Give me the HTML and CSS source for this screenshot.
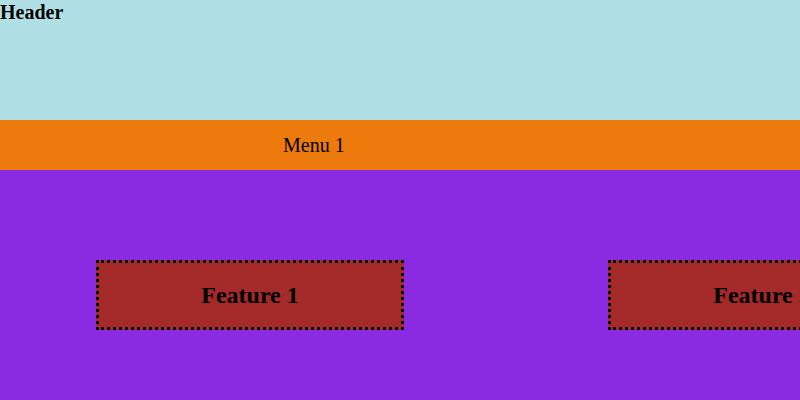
FILE: index.html
```html
<!DOCTYPE html>
<html lang="en">
<head>
    <meta charset="UTF-8">
    <title>Features</title>
    <link rel="stylesheet" href="styles.css">
</head>
<body>
    <header class="header">Header</header>

    <nav class="menu">
        <span class="menu-item">Menu 1</span>
    </nav>

    <main class="features">
        <div class="feature">Feature 1</div>
        <div class="feature">Feature 2</div>
        <div class="feature">Feature 3</div>
    </main>
</body>
</html>
```

FILE: styles.css
```css
body {
    margin: 0;
    font-family: "Liberation Serif", "Times New Roman", serif;
    overflow: hidden;
}

.header {
    height: 120px;
    background: #b0e0e6;
    font-size: 20px;
    font-weight: bold;
    line-height: 25px;
}

.menu {
    height: 50px;
    background: #ec7a0c;
    display: flex;
    align-items: center;
    padding-left: 283px;
    font-size: 20px;
}

.features {
    height: 230px;
    background: #8a2be2;
    display: flex;
    align-items: flex-start;
    gap: 204px;
    padding: 90px 0 0 96px;
    box-sizing: border-box;
}

.feature {
    flex-shrink: 0;
    width: 302px;
    height: 64px;
    background: #a52a2a;
    border: 3px dotted #000;
    display: flex;
    align-items: center;
    justify-content: center;
    font-size: 24px;
    font-weight: bold;
}
```
